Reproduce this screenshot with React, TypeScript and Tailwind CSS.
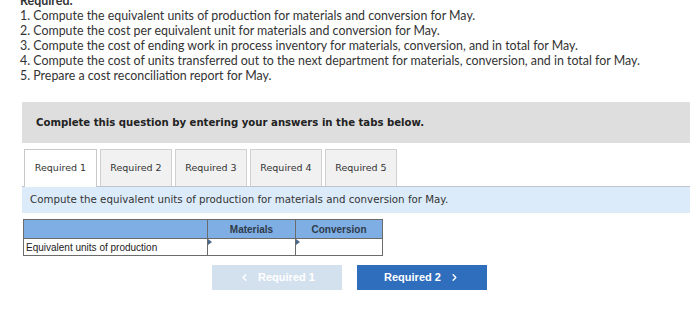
import { ChevronLeft, ChevronRight } from "lucide-react";

const STEPS = [
  "1. Compute the equivalent units of production for materials and conversion for May.",
  "2. Compute the cost per equivalent unit for materials and conversion for May.",
  "3. Compute the cost of ending work in process inventory for materials, conversion, and in total for May.",
  "4. Compute the cost of units transferred out to the next department for materials, conversion, and in total for May.",
  "5. Prepare a cost reconciliation report for May.",
];

const TABS = ["Required 1", "Required 2", "Required 3", "Required 4", "Required 5"];

function CellInput() {
  return (
    <td className="relative h-[17px] border border-[#6b6b6b] bg-white p-0">
      <span className="absolute left-0 top-0 h-0 w-0 border-y-[3px] border-l-[4px] border-y-transparent border-l-[#4a6a8a]" />
    </td>
  );
}

export default function App() {
  return (
    <div className="h-[311px] w-[700px] overflow-hidden bg-white">
      <div className="-mt-[7px] pl-[20px] font-['Lato',sans-serif] text-[12.4px] leading-[15px] text-[#333]">
        <p className="font-bold">Required:</p>
        {STEPS.map((s) => (
          <p key={s}>{s}</p>
        ))}
      </div>

      <div className="ml-[22px] mr-[10px] mt-[19px] flex h-[41px] items-center bg-[#dedede] pl-[14px] font-['DejaVu_Sans',sans-serif] text-[10.15px] font-bold text-[#222]">
        Complete this question by entering your answers in the tabs below.
      </div>

      <div className="ml-[24px] mt-[6px] flex gap-[3px] font-['DejaVu_Sans',sans-serif] text-[9.5px] text-[#333]">
        {TABS.map((t, i) => (
          <div
            key={t}
            className={
              i === 0
                ? "relative z-10 -mb-px flex h-[38px] w-[73px] items-center justify-center border border-b-0 border-[#c8c8c8] bg-white"
                : "flex h-[37px] w-[72px] items-center justify-center border border-b-0 border-[#d0d0d0] bg-[#f1f1f1]"
            }
          >
            {t}
          </div>
        ))}
      </div>

      <div className="ml-[22px] mr-[10px] flex h-[27px] items-center border-t border-[#bfc5cc] bg-[#dcebfa] pl-[8px] font-['DejaVu_Sans',sans-serif] text-[10.25px] text-[#333]">
        Compute the equivalent units of production for materials and conversion for May.
      </div>

      <table className="ml-[23px] mt-[6px] border-collapse font-['Liberation_Sans',sans-serif] text-[10px] text-[#222]">
        <thead>
          <tr className="h-[19px] bg-[#7eaee3]">
            <th className="w-[184px] border border-[#6b6b6b]" />
            <th className="w-[88px] border border-[#6b6b6b] text-center text-[10px] font-bold text-[#2f3b4a]">
              Materials
            </th>
            <th className="w-[87px] border border-[#6b6b6b] text-center text-[10px] font-bold text-[#2f3b4a]">
              Conversion
            </th>
          </tr>
        </thead>
        <tbody>
          <tr>
            <td className="h-[17px] border border-[#6b6b6b] pl-[2px] text-left">
              Equivalent units of production
            </td>
            <CellInput />
            <CellInput />
          </tr>
        </tbody>
      </table>

      <div className="ml-[212px] mt-[9px] flex gap-[15px] font-['Liberation_Sans',sans-serif] text-[11px] font-bold text-white">
        <button className="flex h-[25px] w-[130px] items-center justify-center gap-[8px] bg-[#d3e1ef]">
          <ChevronLeft className="h-[11px] w-[11px]" strokeWidth={3} />
          Required 1
        </button>
        <button className="flex h-[25px] w-[130px] items-center justify-center gap-[8px] bg-[#2f6dbd]">
          Required 2
          <ChevronRight className="h-[11px] w-[11px]" strokeWidth={3} />
        </button>
      </div>
    </div>
  );
}
